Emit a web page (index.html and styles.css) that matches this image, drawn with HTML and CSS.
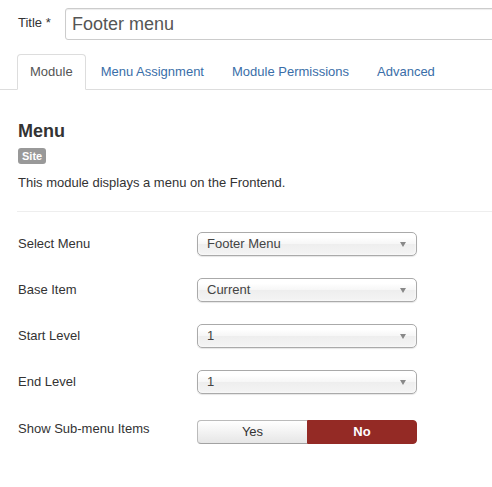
FILE: index.html
```
<!DOCTYPE html>
<html>
<head>
<meta charset="utf-8">
<link rel="stylesheet" href="styles.css">
</head>
<body>
<div class="page">
  <div class="title-row">
    <label class="title-label">Title *</label>
    <div class="title-input">Footer menu</div>
  </div>
  <ul class="nav-tabs">
    <li class="active"><a>Module</a></li>
    <li><a>Menu Assignment</a></li>
    <li><a>Module Permissions</a></li>
    <li><a>Advanced</a></li>
  </ul>
  <div class="content">
    <h3 class="heading">Menu</h3>
    <div class="badge-line"><span class="badge">Site</span></div>
    <p class="desc">This module displays a menu on the Frontend.</p>
  </div>
  <hr class="divider">
  <div class="form">
    <div class="row">
      <div class="label">Select Menu</div>
      <div class="select"><span>Footer Menu</span><b class="arrow"></b></div>
    </div>
    <div class="row">
      <div class="label">Base Item</div>
      <div class="select"><span>Current</span><b class="arrow"></b></div>
    </div>
    <div class="row">
      <div class="label">Start Level</div>
      <div class="select"><span>1</span><b class="arrow"></b></div>
    </div>
    <div class="row">
      <div class="label">End Level</div>
      <div class="select"><span>1</span><b class="arrow"></b></div>
    </div>
    <div class="row row-radio">
      <div class="label label-radio">Show Sub-menu Items</div>
      <div class="btn-group">
        <div class="btn btn-yes">Yes</div>
        <div class="btn btn-no">No</div>
      </div>
    </div>
  </div>
</div>
</body>
</html>
```
FILE: styles.css
```
html, body {
  margin: 0;
  padding: 0;
  background: #fff;
  overflow: hidden;
}
body {
  font-family: "Liberation Sans", Arial, sans-serif;
  font-size: 13px;
  line-height: 18px;
  color: #333;
  width: 492px;
  height: 487px;
}
.page {
  width: 492px;
  overflow: hidden;
}
.title-row {
  display: flex;
  align-items: center;
  padding: 8px 0 0 18px;
}
.title-label {
  width: 47px;
  flex: none;
  margin-top: -3px;
}
.title-input {
  flex: none;
  box-sizing: border-box;
  width: 520px;
  height: 32px;
  border: 1px solid #ccc;
  border-radius: 3px;
  box-shadow: inset 0 1px 1px rgba(0,0,0,0.075);
  padding: 0 6px;
  font-size: 18px;
  line-height: 30px;
  color: #555;
}
.nav-tabs {
  list-style: none;
  display: flex;
  margin: 14px 0 0 0;
  padding: 0 0 0 17px;
  border-bottom: 1px solid #ddd;
}
.nav-tabs li {
  margin-bottom: -1px;
}
.nav-tabs a {
  display: block;
  padding: 8px 12px;
  line-height: 18px;
  margin-right: 2px;
  border: 1px solid transparent;
  border-radius: 4px 4px 0 0;
  color: #3a6ea8;
}
.nav-tabs li.active a {
  color: #555;
  background: #fff;
  border-color: #ddd #ddd transparent;
}
.content {
  padding-left: 18px;
}
.heading {
  margin: 30px 0 0 0;
  font-size: 18px;
  line-height: 22px;
  font-weight: bold;
  color: #333;
}
.badge-line {
  margin-top: 6px;
  line-height: 16px;
  height: 16px;
}
.badge {
  display: inline-block;
  vertical-align: top;
  background: #999;
  color: #fff;
  font-size: 11px;
  font-weight: bold;
  line-height: 14px;
  padding: 1px 4px;
  border-radius: 3px;
}
.desc {
  margin: 10px 0 0 0;
}
.divider {
  margin: 19px 0 0 17px;
  border: 0;
  border-top: 1px solid #eee;
  height: 0;
}
.form {
  display: flex;
  flex-direction: column;
  row-gap: 22px;
  padding: 20px 0 0 18px;
}
.row {
  display: grid;
  grid-template-columns: 179px 220px;
}
.row-radio {
  margin-top: 4px;
}
.label {
  padding-top: 3px;
}
.label-radio {
  padding-top: 0;
}
.select {
  box-sizing: border-box;
  height: 24px;
  display: flex;
  align-items: center;
  padding: 0 10px 0 9px;
  border: 1px solid #aaa;
  border-radius: 5px;
  background: linear-gradient(#fff 20%, #f6f6f6 50%, #eee 52%, #f4f4f4 100%);
  box-shadow: inset 0 0 3px #fff, 0 1px 1px rgba(0,0,0,0.1);
  line-height: 22px;
  color: #444;
}
.select span {
  flex: 1;
}
.arrow {
  width: 0;
  height: 0;
  border-left: 3px solid transparent;
  border-right: 3px solid transparent;
  border-top: 5px solid #888;
}
.btn-group {
  display: flex;
}
.btn {
  box-sizing: border-box;
  width: 110px;
  height: 24px;
  padding: 2px 0;
  line-height: 18px;
  text-align: center;
  font-size: 13px;
}
.btn-yes {
  background: linear-gradient(#fff, #e6e6e6);
  border: 1px solid #bbb;
  border-bottom-color: #a2a2a2;
  border-right: 0;
  border-radius: 4px 0 0 4px;
  color: #333;
}
.btn-no {
  background: #942a25;
  border: 1px solid #942a25;
  border-radius: 0 4px 4px 0;
  color: #fff;
  font-weight: bold;
}
```
